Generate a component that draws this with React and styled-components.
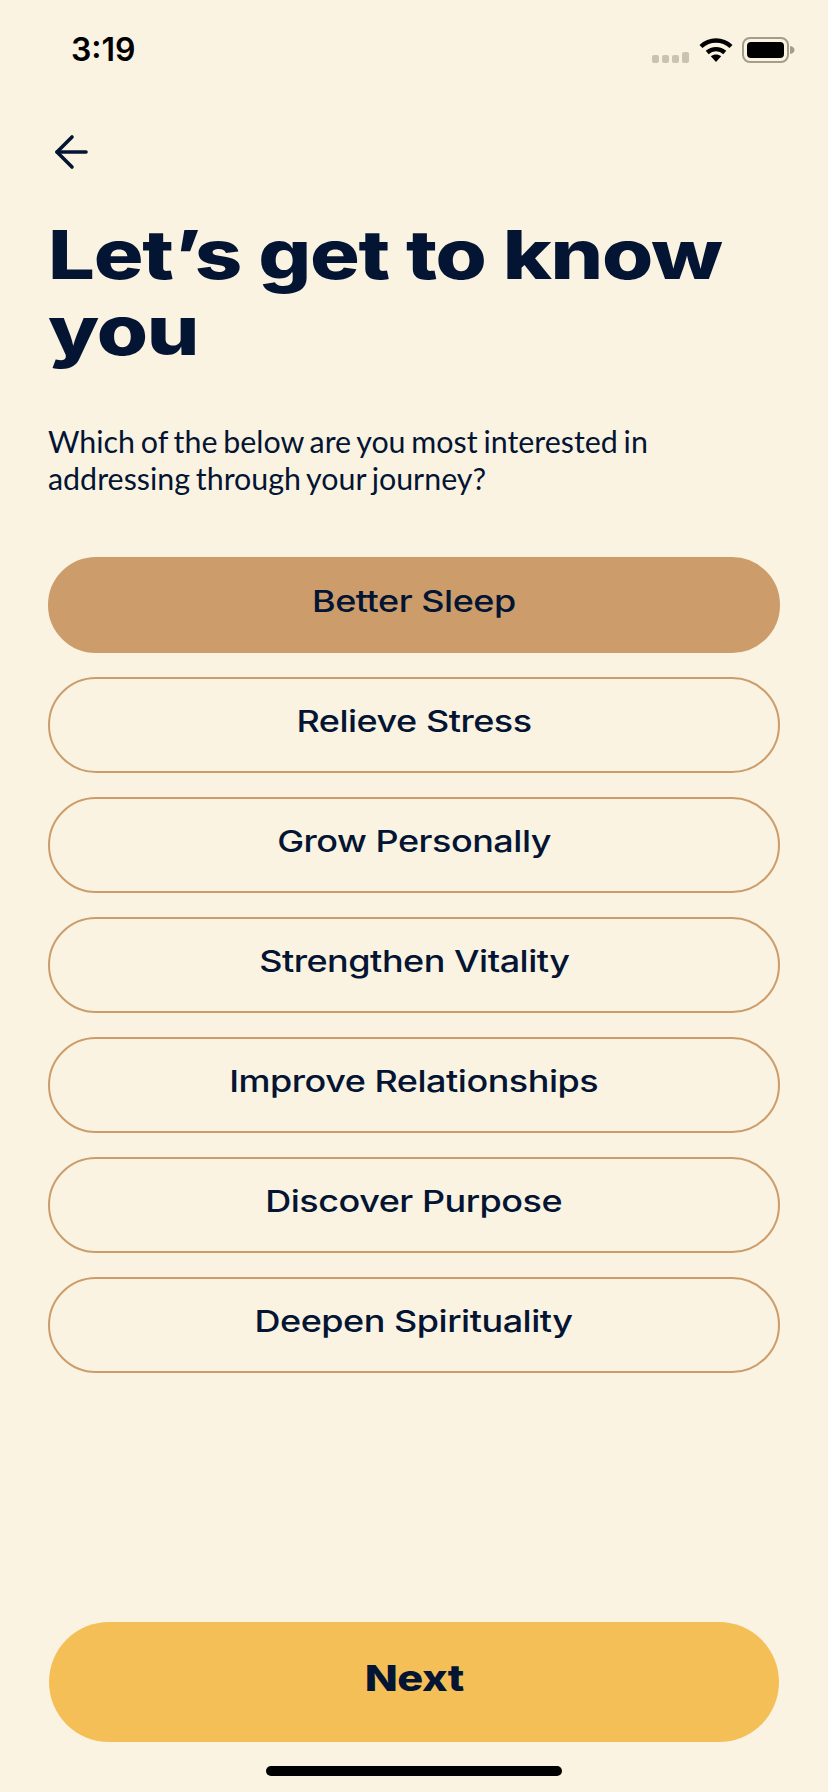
import React from "react";
import styled, { createGlobalStyle } from "styled-components";

const Global = createGlobalStyle`
  html, body { margin: 0; padding: 0; background: #faf3e2; }
  * { box-sizing: border-box; }
`;

const navy = "#041433";

const Page = styled.div`
  width: 828px;
  height: 1792px;
  background: #faf3e2;
  display: flex;
  flex-direction: column;
  color: ${navy};
  overflow: hidden;
`;

const StatusBar = styled.div`
  height: 100px;
  padding: 28px 33px 0 71px;
  display: flex;
  justify-content: space-between;
  align-items: flex-start;
`;

const Time = styled.div`
  font: 600 32px/43px Inter, sans-serif;
  color: #000;
`;

const StatusIcons = styled.div`
  display: flex;
  align-items: flex-start;
  gap: 9px;
  margin-top: 9px;
`;

const Content = styled.main`
  flex: 1;
  display: flex;
  flex-direction: column;
  padding: 0 48px;
`;

const BackButton = styled.button`
  all: unset;
  display: block;
  width: 36px;
  height: 36px;
  margin: 34px 0 0 6px;
`;

const Title = styled.h1`
  margin: 46px 0 0;
  width: 600px;
  font: 800 68px/76px Inter, sans-serif;
  letter-spacing: -1px;
  transform: scaleX(1.22);
  transform-origin: left center;
`;

const Lead = styled.p`
  margin: 55px 0 0;
  font: 400 30.4px/36.5px Lato, sans-serif;
  word-spacing: -2px;
`;

const Options = styled.div`
  margin-top: 61px;
  display: flex;
  flex-direction: column;
  gap: 24px;
`;

const Option = styled.button`
  height: 96px;
  padding: 0 0 8px;
  border-radius: 48px;
  border: 2px solid #cc9d6a;
  background: ${(p) => (p.$selected ? "#cc9d6a" : "transparent")};
  color: ${navy};
  display: flex;
  align-items: center;
  justify-content: center;
`;

const OptionLabel = styled.span`
  display: inline-block;
  font: 500 30px/34px Inter, sans-serif;
  letter-spacing: -0.4px;
  transform: scaleX(1.2);
`;

const NextButton = styled.button`
  margin: auto 1px 0;
  height: 120px;
  padding: 0 0 9px;
  border: none;
  border-radius: 60px;
  background: #f5bf58;
  color: ${navy};
  display: flex;
  align-items: center;
  justify-content: center;
`;

const NextLabel = styled.span`
  display: inline-block;
  font: 800 36px/42px Inter, sans-serif;
  letter-spacing: -0.4px;
  transform: scaleX(1.2);
`;

const HomeZone = styled.div`
  height: 50px;
  display: flex;
  justify-content: center;
  padding-top: 24px;
`;

const HomeBar = styled.div`
  width: 296px;
  height: 10px;
  border-radius: 5px;
  background: #000;
`;

const Signal = () => (
  <svg width="38" height="12" viewBox="0 0 38 12" style={{ marginTop: 15 }}>
    <g fill="#c9c3b2">
      <rect x="0" y="3" width="7" height="8" rx="2" />
      <rect x="10" y="3" width="7" height="8" rx="2" />
      <rect x="20" y="3" width="7" height="8" rx="2" />
      <rect x="30" y="0" width="7" height="11" rx="2" />
    </g>
  </svg>
);

const Wifi = () => (
  <svg width="34" height="25" viewBox="0 0 34 25">
    <g fill="none" stroke="#000" strokeWidth="4.4">
      <path d="M2 9.500C10.500 1.500 23.500 1.500 32 9.500" />
      <path d="M8.200 15.500C13.200 11 20.800 11 25.800 15.500" />
    </g>
    <path d="M11.800 19.300C15 17 19 17 22.200 19.300L17 25Z" fill="#000" />
  </svg>
);

const Battery = () => (
  <svg width="53" height="26" viewBox="0 0 53 26">
    <rect x="1" y="1" width="45" height="24" rx="7" fill="none" stroke="#a39d8c" strokeWidth="2" />
    <rect x="5" y="5" width="37" height="16" rx="4" fill="#000" />
    <path d="M48 9c3 .6 4.500 2 4.500 4s-1.500 3.400-4.500 4Z" fill="#a39d8c" />
  </svg>
);

const Arrow = () => (
  <svg width="36" height="36" viewBox="0 0 36 36" fill="none" stroke={navy} strokeWidth="3.6" strokeLinecap="round" strokeLinejoin="round">
    <path d="M32 18H3" />
    <path d="M18 3 3 18l15 15" />
  </svg>
);

const options = [
  "Better Sleep",
  "Relieve Stress",
  "Grow Personally",
  "Strengthen Vitality",
  "Improve Relationships",
  "Discover Purpose",
  "Deepen Spirituality",
];

export default function App() {
  return (
    <Page>
      <Global />
      <StatusBar>
        <Time>3:19</Time>
        <StatusIcons>
          <Signal />
          <Wifi />
          <Battery />
        </StatusIcons>
      </StatusBar>
      <Content>
        <BackButton aria-label="Back"><Arrow /></BackButton>
        <Title>Let’s get to know you</Title>
        <Lead>
          Which of the below are you most interested in
          <br />
          addressing through your journey?
        </Lead>
        <Options>
          {options.map((o, i) => (
            <Option key={o} $selected={i === 0}>
              <OptionLabel>{o}</OptionLabel>
            </Option>
          ))}
        </Options>
        <NextButton><NextLabel>Next</NextLabel></NextButton>
      </Content>
      <HomeZone><HomeBar /></HomeZone>
    </Page>
  );
}
